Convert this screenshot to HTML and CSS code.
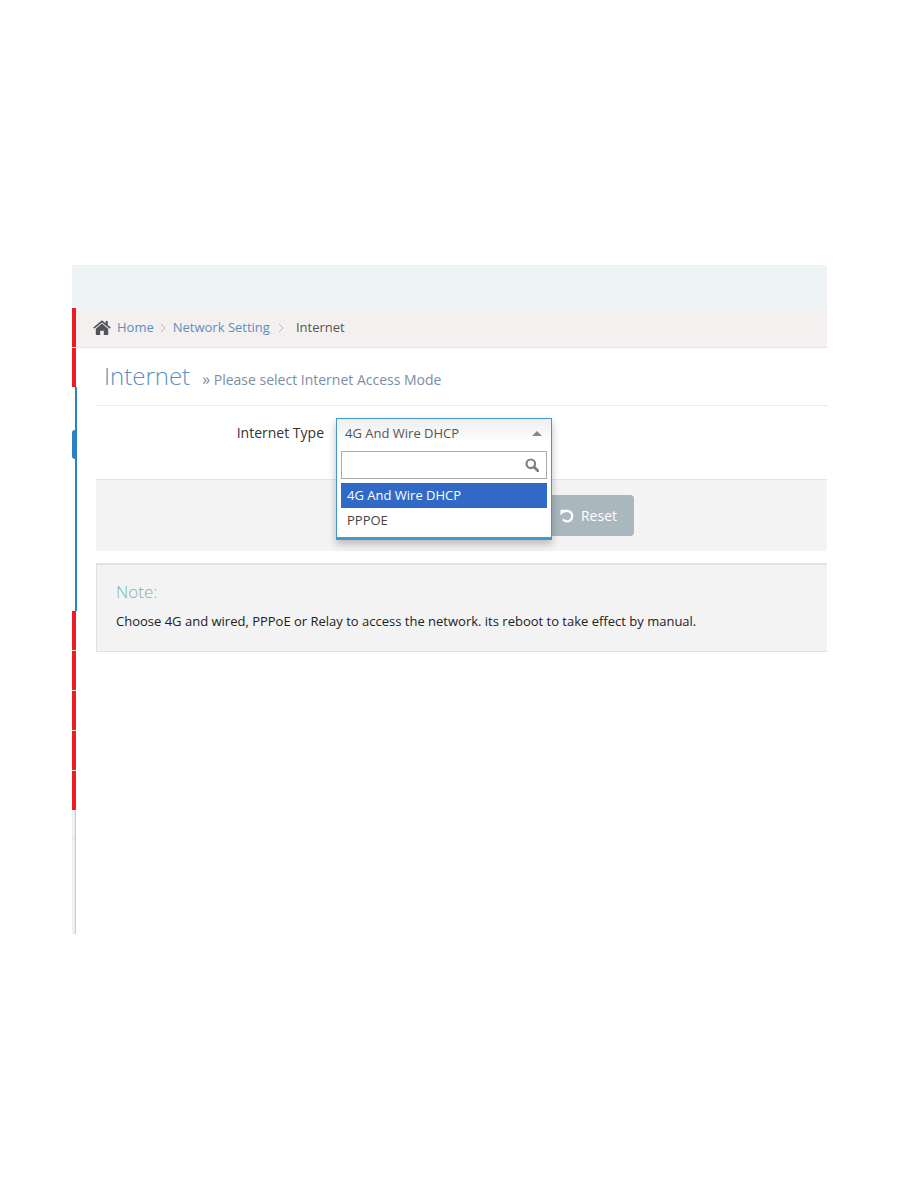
FILE: index.html
```html
<!DOCTYPE html>
<html lang="en">
<head>
<meta charset="utf-8">
<title>Internet</title>
<link rel="stylesheet" href="styles.css">
</head>
<body>
<div class="frame">
  <div class="topbar"></div>
  <div class="shell">
    <aside class="sidebar">
      <div class="tab red"></div>
      <div class="tab red"></div>
      <div class="tab-active"><span class="notch"></span></div>
      <div class="tab red"></div>
      <div class="tab red"></div>
      <div class="tab red"></div>
      <div class="tab red"></div>
      <div class="tab red"></div>
      <div class="side-item"></div>
      <div class="side-rest"></div>
    </aside>
    <main class="main">
      <nav class="crumbs">
        <svg class="home" viewBox="0 0 18 15" width="18" height="15" aria-hidden="true"><path d="M9 0.3 0.2 7.6l1 1.2L9 2.4l7.8 6.4 1-1.2-3-2.5V1h-2.2v2.3L9 .3zM9 3.6 2.8 8.8v5.6c0 .3.2.5.5.5h3.9v-4.2h3.6v4.2h3.9c.3 0 .5-.2.5-.5V8.8L9 3.6z" fill="#50545c"/></svg>
        <a class="crumb">Home</a>
        <svg class="chev first" viewBox="0 0 6 10" width="6" height="10" aria-hidden="true"><path d="M1 1l4 4-4 4" fill="none" stroke="#b5b9c0" stroke-width="1"/></svg>
        <a class="crumb">Network Setting</a>
        <svg class="chev second" viewBox="0 0 6 10" width="6" height="10" aria-hidden="true"><path d="M1 1l4 4-4 4" fill="none" stroke="#b5b9c0" stroke-width="1"/></svg>
        <span class="crumb-current">Internet</span>
      </nav>
      <div class="content">
        <header class="page-head">
          <h1 class="page-title">Internet</h1>
          <p class="page-sub"><span class="raquo">»</span> Please select Internet Access Mode</p>
        </header>
        <form class="form-row">
          <label class="form-label">Internet Type</label>
          <div class="select">
            <div class="select-head">
              <span class="select-value">4G And Wire DHCP</span>
              <span class="caret"></span>
            </div>
            <div class="select-search">
              <div class="search-box">
                <svg viewBox="0 0 14 14" width="14" height="14" aria-hidden="true"><circle cx="5.8" cy="5.8" r="4.3" fill="none" stroke="#7c8084" stroke-width="2.2"/><path d="M9 9l3.8 3.8" stroke="#7c8084" stroke-width="2.8" stroke-linecap="round"/></svg>
              </div>
            </div>
            <ul class="options">
              <li class="option selected">4G And Wire DHCP</li>
              <li class="option">PPPOE</li>
            </ul>
          </div>
        </form>
        <div class="actions">
          <button type="button" class="btn-reset">
            <svg viewBox="0 0 14 14" width="14" height="14" aria-hidden="true"><path d="M3.4 3.2A5.3 5.3 0 1 1 3 10.6" fill="none" stroke="#fff" stroke-width="2.2"/><path d="M0.5 0.8 6.2 0.8 0.5 6.5z" fill="#fff"/></svg>
            <span>Reset</span>
          </button>
        </div>
        <section class="note">
          <h4 class="note-title">Note:</h4>
          <p class="note-text">Choose 4G and wired, PPPoE or Relay to access the network. its reboot to take effect by manual.</p>
        </section>
      </div>
    </main>
  </div>
</div>
</body>
</html>
```
FILE: styles.css
```css
* { box-sizing: border-box; }
html, body { margin: 0; padding: 0; background: #fff; }
body {
  font-family: "Open Sans", "Liberation Sans", sans-serif;
  font-size: 13px;
  color: #333;
  height: 1200px;
  overflow: hidden;
}
.frame { width: 755px; margin: 265px 0 0 72px; }
.topbar { height: 42px; background: #eef3f6; }
.shell { display: flex; height: 627px; }

.sidebar { width: 5px; flex: none; display: flex; flex-direction: column; padding-top: 1px; }
.tab { height: 40px; width: 4px; background: #ed1c24; border-bottom: 1px solid #f4f4f4; flex: none; }
.tab-active {
  position: relative;
  height: 224px;
  margin-top: -1px;
  flex: none;
  border-right: 2px solid #2f80c2;
  width: 5px;
}
.notch {
  position: absolute;
  left: 0;
  top: 43px;
  width: 3px;
  height: 29px;
  background: #2f80c2;
  border-radius: 6px 0 0 6px;
}
.side-item { height: 28px; width: 4px; flex: none; background: #f0f0f0; border-right: 1px solid #c9c9c9; border-bottom: 1px solid #dcdcdc; }
.side-rest { flex: 1; width: 4px; background: #f0f0f0; border-right: 1px solid #c9c9c9; }

.main { flex: 1; min-width: 0; margin-left: -1px; }
.crumbs {
  height: 41px;
  background: #f4f0ef;
  border-bottom: 1px solid #e4e2e2;
  display: flex;
  align-items: center;
  padding-left: 17px;
  font-size: 13px;
}
.home { margin-right: 6px; }
.crumb { color: #5b8fc0; }
.chev.first { margin: 1px 7px 0 6px; }
.chev.second { margin: 1px 12px 0 8px; }
.crumb-current { color: #555; }

.content { padding-left: 20px; }
.page-head {
  height: 58px;
  border-bottom: 1px dotted #d8d8d8;
  display: flex;
  align-items: baseline;
  padding: 10px 0 0 8px;
}
.page-title {
  margin: 0;
  font-size: 24px;
  font-weight: 300;
  line-height: 36px;
  color: #5a8fc0;
}
.page-sub { margin: 0 0 0 12px; font-size: 14px; color: #7b8ea5; }
.raquo { font-size: 16px; }

.form-row { position: relative; height: 73px; padding-top: 12px; display: flex; }
.form-label {
  width: 228px;
  text-align: right;
  font-size: 14px;
  line-height: 29px;
  color: #333;
}
.select {
  position: absolute;
  left: 240px;
  top: 12px;
  width: 216px;
  height: 122px;
  background: #fff;
  border: 1px solid #4595cf;
  border-bottom-width: 3px;
  box-shadow: 0 4px 8px rgba(0, 0, 0, .25);
  z-index: 2;
}
.select-head {
  height: 29px;
  padding: 0 9px 2px 8px;
  display: flex;
  align-items: center;
  justify-content: space-between;
  font-size: 13px;
  color: #555;
  background: linear-gradient(#eeeeee, #ffffff 80%);
}
.caret {
  width: 0;
  height: 0;
  margin-top: 2px;
  border-left: 5px solid transparent;
  border-right: 5px solid transparent;
  border-bottom: 5px solid #888;
}
.select-search { padding: 3px 4px 4px 4px; }
.search-box {
  height: 28px;
  border: 1px solid #aaa;
  display: flex;
  align-items: center;
  justify-content: flex-end;
  padding-right: 7px;
}
.options { list-style: none; margin: 0; padding: 0 4px; }
.option {
  height: 25px;
  line-height: 25px;
  padding-left: 6px;
  font-size: 13px;
  color: #444;
}
.option.selected { background: #3169c6; color: #fff; }

.actions {
  height: 72px;
  background: #f4f4f4;
  border-top: 1px solid #e5e5e5;
  padding: 15px 0 0 404px;
}
.btn-reset {
  width: 134px;
  height: 41px;
  border: 0;
  border-radius: 4px;
  background: #abb7bf;
  color: #fff;
  font: 14px "Open Sans", "Liberation Sans", sans-serif;
  display: flex;
  align-items: center;
  justify-content: flex-end;
  gap: 7px;
  padding: 0 17px 0 0;
}

.note {
  margin-top: 12px;
  height: 89px;
  background: #f3f3f3;
  border: 1px solid #e2e2e2;
  border-top-width: 2px;
  border-right: 0;
  padding: 16px 0 0 19px;
}
.note-title {
  margin: 0;
  font-size: 17px;
  font-weight: 300;
  line-height: 22px;
  color: #7db5a8;
}
.note-text { margin: 9px 0 0; font-size: 13px; line-height: 18px; color: #222; }
```
